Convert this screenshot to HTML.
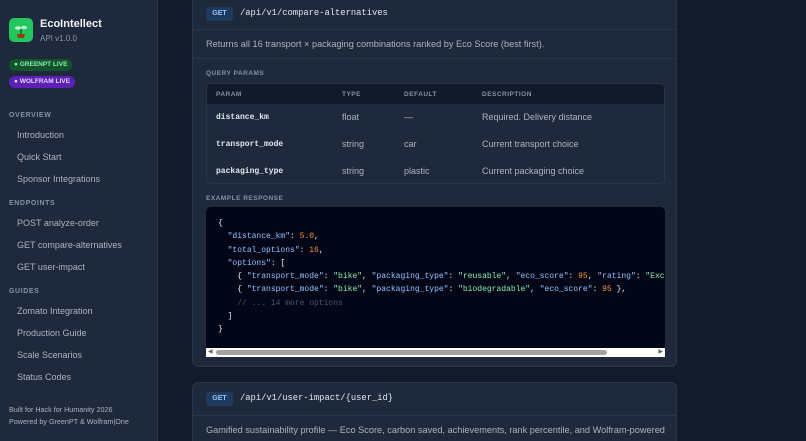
<!DOCTYPE html>
<html style="width:806px;height:441px;overflow:hidden"><head><style>
*{box-sizing:border-box;margin:0;padding:0}
body{width:806px;height:441px;overflow:hidden;background:#131b2b;font-family:"Liberation Sans",sans-serif;position:relative;color:#cbd5e1}
.sb{position:absolute;left:0;top:0;width:158px;height:441px;background:#1e293b;border-right:1px solid #2b3649}
.logo{position:absolute;left:9px;top:18px;width:24px;height:24px;border-radius:5px;background:#22c55e}
.t1{position:absolute;left:40px;top:18px;font-size:11px;font-weight:bold;color:#f1f5f9}
.t2{position:absolute;left:40px;top:34px;font-size:8px;color:#8b95a7}
.pill{position:absolute;left:9px;height:12px;border-radius:6px;font-size:6.5px;font-weight:bold;padding:0 5px;line-height:12px}
.sec{position:absolute;left:9px;font-size:7px;font-weight:bold;letter-spacing:.6px;color:#8591a5}
.it{position:absolute;left:17px;font-size:9px;color:#aab4c3}
.ft{position:absolute;left:9px;font-size:7.2px;color:#aab4c3}
.card{position:absolute;left:192px;width:485px;background:#1e293b;border:1px solid #2a3547;border-radius:6px}
.get{position:absolute;left:13px;width:27px;height:14px;border-radius:3px;background:#1e3a5f;color:#93c5fd;font-size:7px;font-weight:bold;text-align:center;line-height:14px}
.path{position:absolute;left:47px;font-family:"Liberation Mono",monospace;font-size:8.8px;color:#e2e8f0}
.hr{position:absolute;left:0;right:0;height:1px;background:#2a3547}
.desc{position:absolute;left:13px;font-size:9.2px;color:#aab4c3;white-space:nowrap}
.lab{position:absolute;left:13px;font-size:6.5px;font-weight:bold;letter-spacing:.5px;color:#8591a5}
.tbl{position:absolute;left:13px;width:459px;border:1px solid #2a3547;border-radius:5px;overflow:hidden}
.th{height:20px;background:#111a2b;position:relative}
.c{position:absolute;font-size:9px;color:#aab4c3}
.th .c{font-size:6.5px;font-weight:bold;letter-spacing:.5px;color:#8591a5;top:7px}
.m{font-family:"Liberation Mono",monospace;font-weight:bold;color:#e2e8f0;font-size:8px}
.code{position:absolute;left:13px;width:459px;height:150px;background:#020617;border-radius:5px 5px 0 0;overflow:hidden;font-family:"Liberation Mono",monospace;font-size:8px;line-height:13.3px;padding:10px 0 0 12px;white-space:pre;color:#e2e8f0}
.k{color:#93c5fd}.s{color:#86efac}.n{color:#fb923c}.cm{color:#475569}
.sc{position:absolute;left:13px;width:459px;height:9px;background:#fff}
</style></head><body>
<div class="sb">
<div class="logo"><svg width="24" height="24" viewBox="0 0 24 24"><path d="M12 17V11" stroke="#166534" stroke-width="1.5"/><ellipse cx="9" cy="10" rx="3" ry="1.7" fill="#bbf7d0"/><ellipse cx="15" cy="9.5" rx="3" ry="1.7" fill="#bbf7d0"/><path d="M8 16h8l-1 4H9z" fill="#92400e"/></svg></div>
<div class="t1">EcoIntellect</div><div class="t2">API v1.0.0</div>
<div class="pill" style="top:59px;background:#14532d;color:#86efac">● GREENPT LIVE</div>
<div class="pill" style="top:76px;background:#5b21b6;color:#e9d5ff">● WOLFRAM LIVE</div>
<div class="sec" style="top:112px">OVERVIEW</div>
<div class="it" style="top:130px">Introduction</div>
<div class="it" style="top:152px">Quick Start</div>
<div class="it" style="top:174px">Sponsor Integrations</div>
<div class="sec" style="top:200px">ENDPOINTS</div>
<div class="it" style="top:218px">POST analyze-order</div>
<div class="it" style="top:240px">GET compare-alternatives</div>
<div class="it" style="top:262px">GET user-impact</div>
<div class="sec" style="top:288px">GUIDES</div>
<div class="it" style="top:306px">Zomato Integration</div>
<div class="it" style="top:328px">Production Guide</div>
<div class="it" style="top:350px">Scale Scenarios</div>
<div class="it" style="top:372px">Status Codes</div>
<div class="ft" style="top:405px">Built for Hack for Humanity 2026</div>
<div class="ft" style="top:417px">Powered by GreenPT &amp; Wolfram|One</div>
</div>

<div class="card" style="top:-10px;height:377px">
<div class="get" style="top:16px">GET</div><div class="path" style="top:17px">/api/v1/compare-alternatives</div>
<div class="hr" style="top:38px"></div>
<div class="desc" style="top:48px">Returns all 16 transport × packaging combinations ranked by Eco Score (best first).</div>
<div class="hr" style="top:67px"></div>
<div class="lab" style="top:79px">QUERY PARAMS</div>
<div class="tbl" style="top:92px;height:101px">
<div class="th"><span class="c" style="left:9px">PARAM</span><span class="c" style="left:135px">TYPE</span><span class="c" style="left:197px">DEFAULT</span><span class="c" style="left:275px">DESCRIPTION</span></div>
<div style="position:relative;height:27px"><span class="c m" style="left:9px;top:9px">distance_km</span><span class="c" style="left:135px;top:8px">float</span><span class="c" style="left:197px;top:8px">—</span><span class="c" style="left:275px;top:8px">Required. Delivery distance</span></div>
<div style="position:relative;height:27px"><span class="c m" style="left:9px;top:9px">transport_mode</span><span class="c" style="left:135px;top:8px">string</span><span class="c" style="left:197px;top:8px">car</span><span class="c" style="left:275px;top:8px">Current transport choice</span></div>
<div style="position:relative;height:27px"><span class="c m" style="left:9px;top:9px">packaging_type</span><span class="c" style="left:135px;top:8px">string</span><span class="c" style="left:197px;top:8px">plastic</span><span class="c" style="left:275px;top:8px">Current packaging choice</span></div>
</div>
<div class="lab" style="top:204px">EXAMPLE RESPONSE</div>
<div class="code" style="top:216px">{
  <span class="k">"distance_km"</span>: <span class="n">5.0</span>,
  <span class="k">"total_options"</span>: <span class="n">16</span>,
  <span class="k">"options"</span>: [
    { <span class="k">"transport_mode"</span>: <span class="s">"bike"</span>, <span class="k">"packaging_type"</span>: <span class="s">"reusable"</span>, <span class="k">"eco_score"</span>: <span class="n">95</span>, <span class="k">"rating"</span>: <span class="s">"Excellent"</span> },
    { <span class="k">"transport_mode"</span>: <span class="s">"bike"</span>, <span class="k">"packaging_type"</span>: <span class="s">"biodegradable"</span>, <span class="k">"eco_score"</span>: <span class="n">95</span> },
    <span class="cm">// ... 14 more options</span>
  ]
}</div>
<div class="sc" style="top:357px"><div style="position:absolute;left:10px;top:2px;width:391px;height:5px;border-radius:3px;background:#a3a3a3"></div><div style="position:absolute;left:2px;top:2px;font-size:6px;color:#666;line-height:5px">◀</div><div style="position:absolute;right:2px;top:2px;font-size:6px;color:#666;line-height:5px">▶</div></div>
</div>

<div class="card" style="top:382px;height:80px">
<div class="get" style="top:9px">GET</div><div class="path" style="top:10px">/api/v1/user-impact/{user_id}</div>
<div class="hr" style="top:32px"></div>
<div class="desc" style="top:42px">Gamified sustainability profile — Eco Score, carbon saved, achievements, rank percentile, and Wolfram-powered</div>
</div>
</body></html>
